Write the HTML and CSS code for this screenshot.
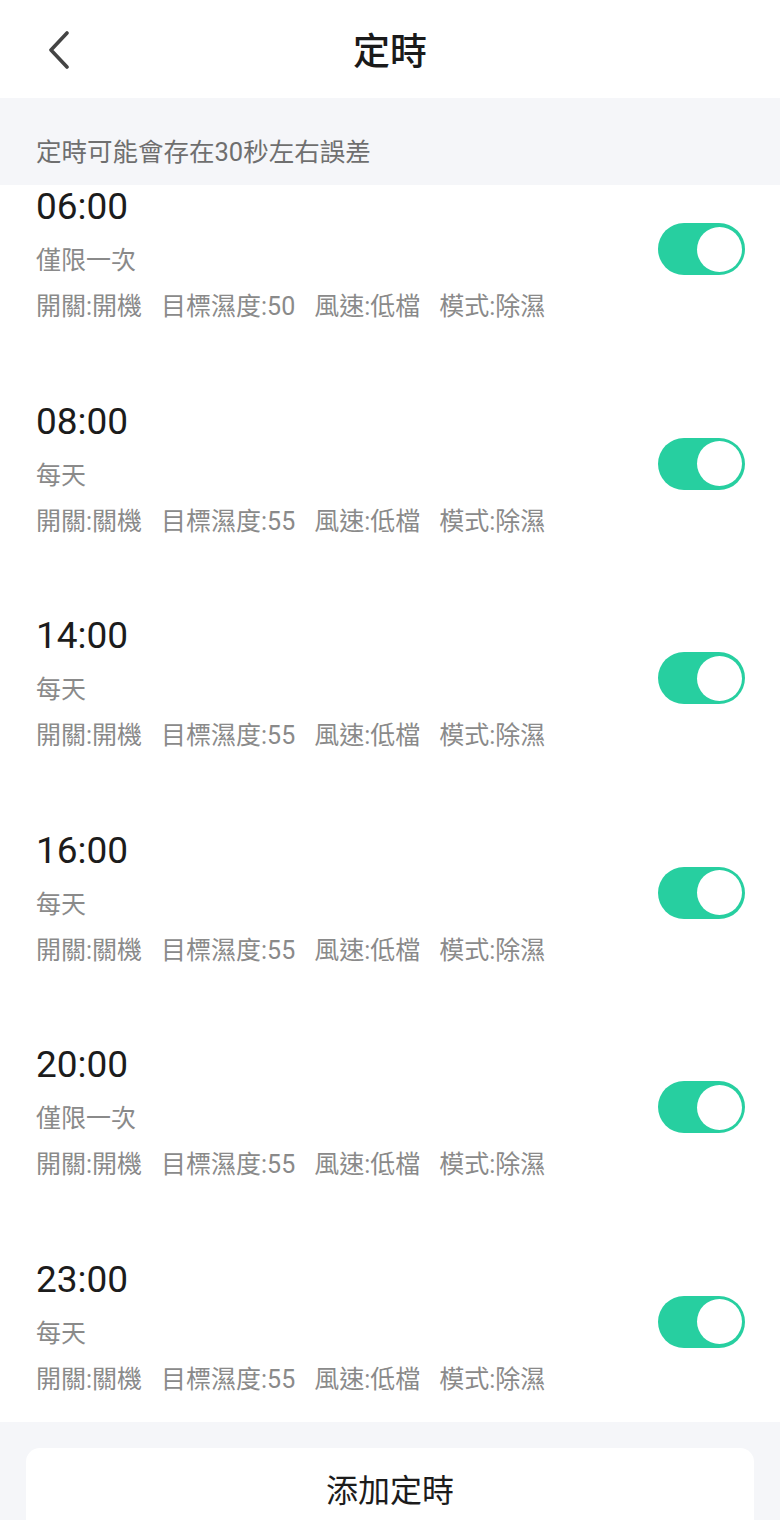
FILE: index.html
```html
<!DOCTYPE html>
<html lang="zh-Hant">
<head>
<meta charset="utf-8">
<link rel="stylesheet" href="styles.css">
</head>
<body>
<div class="page">
  <header class="topbar">
    <button class="back" aria-label="back">
      <svg width="26" height="38" viewBox="0 0 26 38"><path d="M21 2 L5 19 L21 36" fill="none" stroke="#444" stroke-width="3.6" stroke-linecap="round" stroke-linejoin="round"/></svg>
    </button>
    <h1 class="title">定時</h1>
  </header>
  <div class="notice">定時可能會存在30秒左右誤差</div>
  <ul class="list">
    <li class="item">
      <div class="info">
        <div class="time">06:00</div>
        <div class="repeat">僅限一次</div>
        <div class="detail"><span>開關:開機</span><span>目標濕度:50</span><span>風速:低檔</span><span>模式:除濕</span></div>
      </div>
      <div class="switch"><span class="knob"></span></div>
    </li>
    <li class="item">
      <div class="info">
        <div class="time">08:00</div>
        <div class="repeat">每天</div>
        <div class="detail"><span>開關:關機</span><span>目標濕度:55</span><span>風速:低檔</span><span>模式:除濕</span></div>
      </div>
      <div class="switch"><span class="knob"></span></div>
    </li>
    <li class="item">
      <div class="info">
        <div class="time">14:00</div>
        <div class="repeat">每天</div>
        <div class="detail"><span>開關:開機</span><span>目標濕度:55</span><span>風速:低檔</span><span>模式:除濕</span></div>
      </div>
      <div class="switch"><span class="knob"></span></div>
    </li>
    <li class="item">
      <div class="info">
        <div class="time">16:00</div>
        <div class="repeat">每天</div>
        <div class="detail"><span>開關:關機</span><span>目標濕度:55</span><span>風速:低檔</span><span>模式:除濕</span></div>
      </div>
      <div class="switch"><span class="knob"></span></div>
    </li>
    <li class="item">
      <div class="info">
        <div class="time">20:00</div>
        <div class="repeat">僅限一次</div>
        <div class="detail"><span>開關:開機</span><span>目標濕度:55</span><span>風速:低檔</span><span>模式:除濕</span></div>
      </div>
      <div class="switch"><span class="knob"></span></div>
    </li>
    <li class="item">
      <div class="info">
        <div class="time">23:00</div>
        <div class="repeat">每天</div>
        <div class="detail"><span>開關:關機</span><span>目標濕度:55</span><span>風速:低檔</span><span>模式:除濕</span></div>
      </div>
      <div class="switch"><span class="knob"></span></div>
    </li>
  </ul>
  <div class="footer">
    <button class="add">添加定時</button>
  </div>
</div>
</body>
</html>
```

FILE: styles.css
```css
* { box-sizing: border-box; }
html, body { margin: 0; padding: 0; }
body {
  width: 780px;
  height: 1520px;
  overflow: hidden;
  background: #f5f6f9;
  font-family: Roboto, "Noto Sans CJK TC", "Noto Sans CJK SC", sans-serif;
  color: #222;
}
.page { display: flex; flex-direction: column; height: 1520px; }
.topbar {
  flex: none;
  height: 98px;
  background: #fff;
  display: flex;
  align-items: center;
  justify-content: center;
  position: relative;
}
.back {
  position: absolute;
  left: 46px;
  top: 31px;
  background: none;
  border: 0;
  padding: 0;
  width: 26px;
  height: 38px;
}
.back svg { display: block; }
.title {
  margin: 0;
  font-size: 37px;
  font-weight: 500;
  color: #1a1a1a;
  line-height: 1;
  margin-top: 6px;
}
.notice {
  flex: none;
  height: 87px;
  padding: 37px 0 0 36px;
  font-size: 25.5px;
  line-height: 34px;
  color: #6f6f6f;
  background: #f5f6f9;
}
.list {
  flex: none;
  list-style: none;
  margin: 0;
  padding: 0;
  background: #fff;
}
.item {
  height: 214.5px;
  padding: 52px 35px 25.5px 36px;
  display: flex;
  align-items: center;
  justify-content: space-between;
}
.item:first-child { height: 164.5px; padding-top: 2px; }
.info { display: flex; flex-direction: column; }
.time {
  font-size: 37px;
  line-height: 40px;
  color: #1c1c1c;
}
.repeat {
  margin-top: 17px;
  font-size: 25px;
  line-height: 34px;
  color: #8a8a8a;
}
.detail {
  margin-top: 12px;
  font-size: 25px;
  line-height: 34px;
  color: #8a8a8a;
  display: flex;
  gap: 19px;
  white-space: nowrap;
}
.switch {
  width: 87px;
  height: 52px;
  border-radius: 26px;
  background: #27cfa0;
  display: flex;
  align-items: center;
  justify-content: flex-end;
  padding-right: 3px;
  margin-bottom: 13px;
  flex: none;
}
.knob {
  width: 45px;
  height: 45px;
  border-radius: 50%;
  background: #fff;
}
.footer {
  flex: 1;
  background: #f5f6f9;
  padding: 26px 26px 0 26px;
}
.add {
  display: block;
  width: 100%;
  height: 100px;
  border: 0;
  border-radius: 14px;
  background: #fff;
  font-family: inherit;
  font-size: 32px;
  color: #1c1c1c;
  padding: 0 0 14px 0;
  line-height: 1;
}
```
